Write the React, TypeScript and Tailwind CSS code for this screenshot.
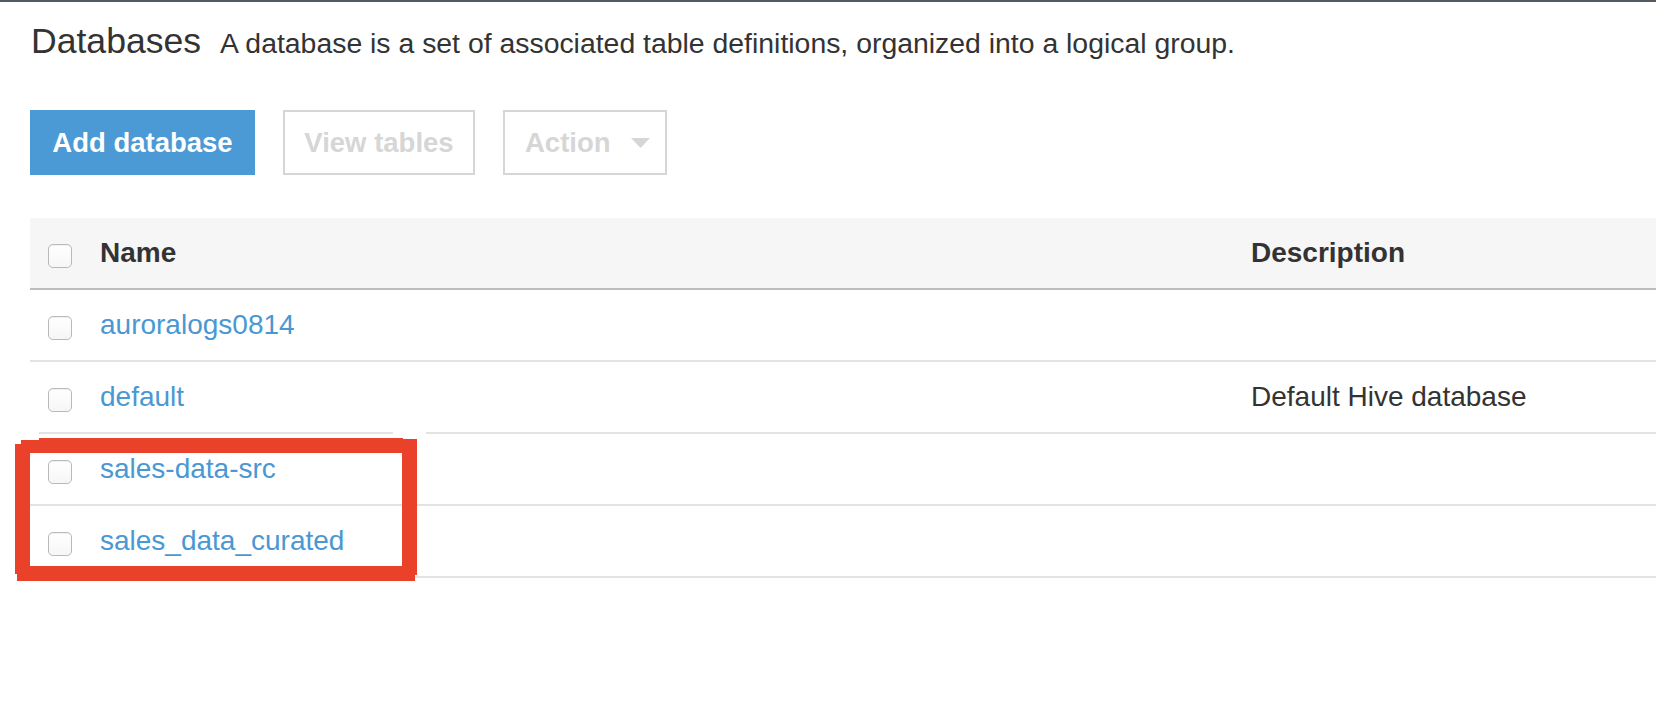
import React from 'react';

interface DbRow {
    name: string;
    description: string;
}

const rows: DbRow[] = [
    { name: 'auroralogs0814', description: '' },
    { name: 'default', description: 'Default Hive database' },
    { name: 'sales-data-src', description: '' },
    { name: 'sales_data_curated', description: '' },
];

const Checkbox: React.FC = () => (
    <span className="mt-[6px] block w-[24px] h-[24px] rounded-[5px] border-[1.5px] border-[#b9b9b9] bg-gradient-to-b from-white to-[#f6f6f6] shadow-[inset_0_1px_1px_rgba(0,0,0,0.06)]" />
);

const App: React.FC = () => {
    return (
        <div className="relative min-h-screen w-full bg-white text-[#333] font-['Liberation_Sans',Arial,Helvetica,sans-serif]">
            {/* console nav edge */}
            <div className="h-[2px] bg-[#545b64]" />

            <div className="pl-[30px]">
                {/* Title */}
                <div className="flex items-baseline pt-[19px] leading-[40px]">
                    <h1 className="ml-px text-[35.6px] font-normal">Databases</h1>
                    <p className="ml-[19px] text-[28.4px]">A database is a set of associated table definitions, organized into a logical group.</p>
                </div>

                {/* Actions */}
                <div className="mt-[47px] flex gap-[28px]">
                    <button className="flex h-[65px] w-[225px] items-center justify-center bg-[#4c9ad5] text-[27.5px] font-bold text-white">
                        Add database
                    </button>
                    <button className="flex h-[65px] w-[192px] items-center justify-center border-2 border-[#d6d6d6] bg-white text-[27.5px] font-bold text-[#d6d6d6]">
                        View tables
                    </button>
                    <button className="flex h-[65px] w-[164px] items-center border-2 border-[#d6d6d6] bg-white pl-[20px] text-[27.5px] font-bold text-[#d6d6d6]">
                        Action
                        <svg className="ml-[20px]" width="19" height="10" viewBox="0 0 19 10">
                            <polygon points="0,0 19,0 9.5,10" fill="#d6d6d6" />
                        </svg>
                    </button>
                </div>

                {/* Table */}
                <div className="mt-[43px] text-[28px]">
                    <div className="grid h-[72px] grid-cols-[70px_1151px_1fr] items-center border-b-2 border-[#bdbdbd] bg-[#f6f6f6]">
                        <div className="pl-[18px]"><Checkbox /></div>
                        <div className="font-bold">Name</div>
                        <div className="font-bold">Description</div>
                    </div>
                    {rows.map((r) => (
                        <div key={r.name} className="grid h-[72px] grid-cols-[70px_1151px_1fr] items-center border-b-2 border-[#e3e3e3]">
                            <div className="pl-[18px]"><Checkbox /></div>
                            <div className="text-[#4a98d3]">{r.name}</div>
                            <div>{r.description}</div>
                        </div>
                    ))}
                </div>
            </div>

            {/* hand drawn highlight over the last two rows */}
            <svg className="pointer-events-none absolute left-0 top-0" width="1656" height="718">
                <rect x="30" y="430" width="9" height="4" fill="#fff" />
                <rect x="393" y="430" width="33" height="4" fill="#fff" />
                <g fill="#e9412a">
                    <rect x="39" y="438" width="364" height="15" />
                    <rect x="21" y="440" width="20" height="13" />
                    <rect x="15" y="444" width="15" height="130" />
                    <rect x="17" y="566" width="398" height="15" />
                    <rect x="402" y="439" width="15" height="136" />
                </g>
            </svg>
        </div>
    );
};

export default App;
